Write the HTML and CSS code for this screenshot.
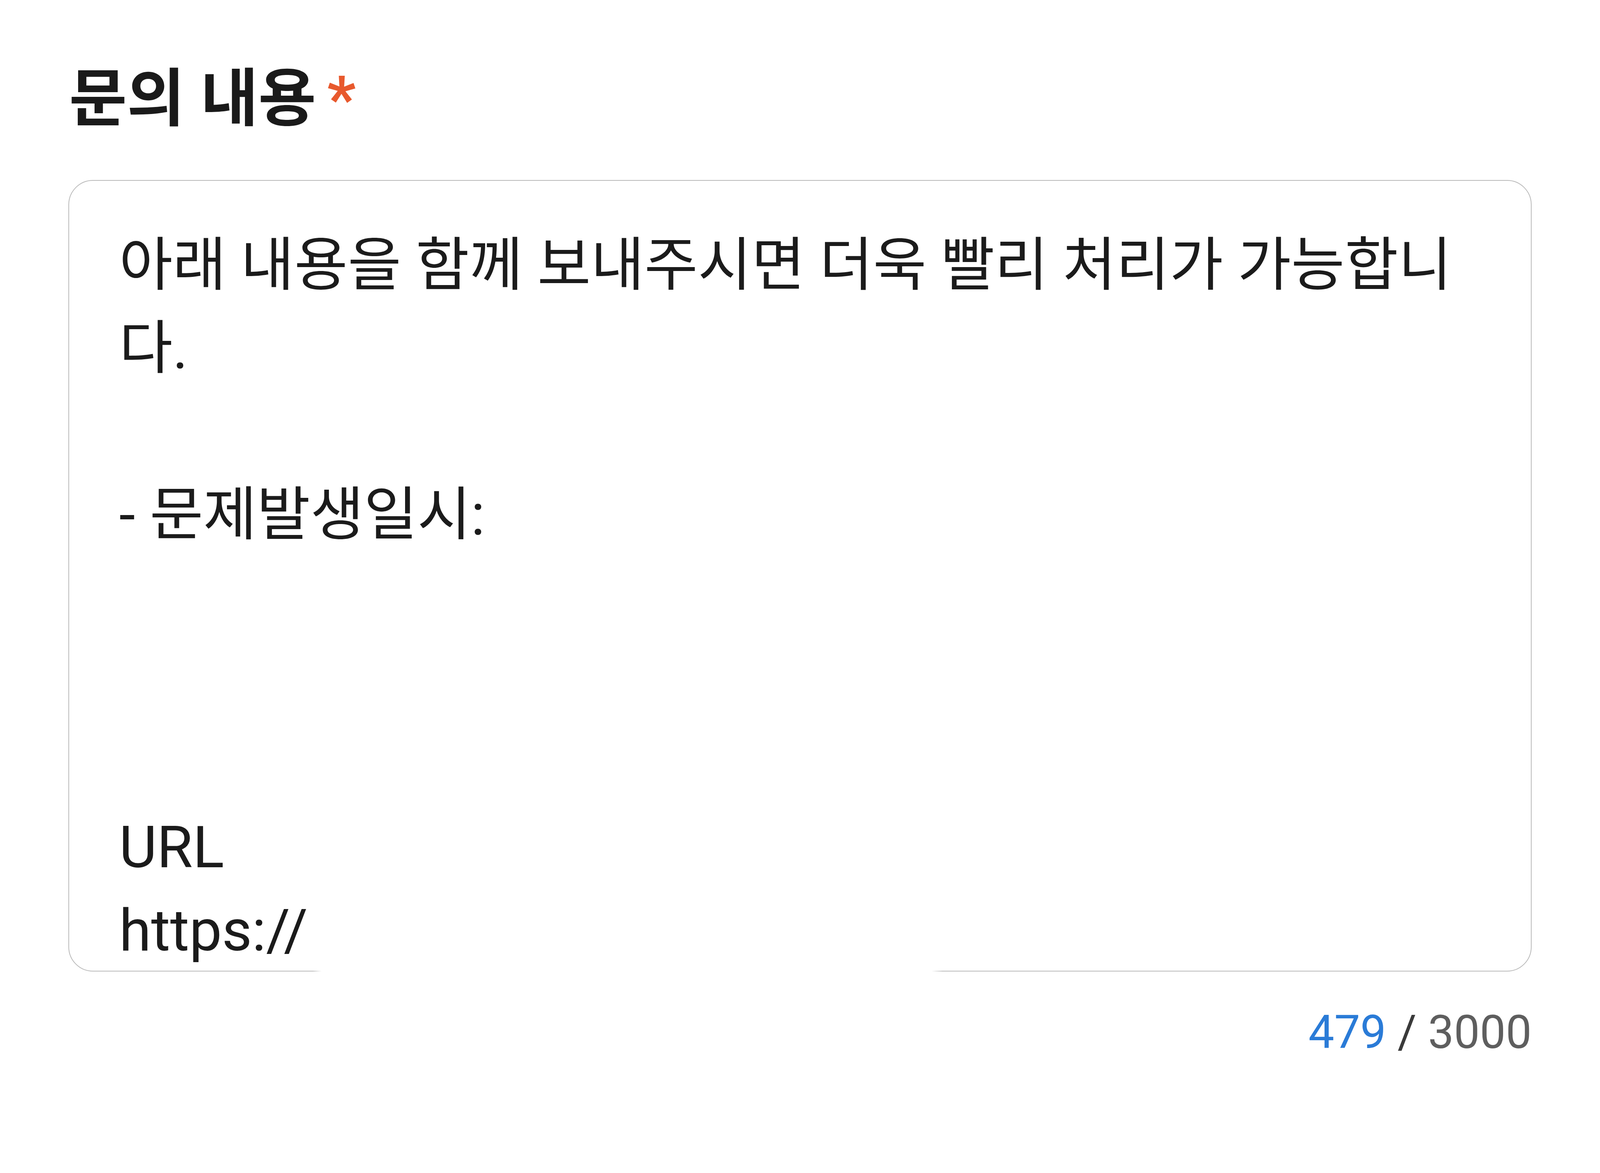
FILE: index.html
```html
<!DOCTYPE html>
<html lang="ko">
<head>
<meta charset="utf-8">
<title>문의 내용</title>
<link rel="stylesheet" href="styles.css">
</head>
<body>
<section class="field">
  <h2 class="field-label">문의 내용<span class="required">*</span></h2>
  <div class="textbox-wrap">
    <div class="textbox">
      <div class="textbox-content">아래 내용을 함께 보내주시면 더욱 빨리 처리가 가능합니다.

- 문제발생일시:



URL
https://</div>
    </div>
    <span class="edge-fade"></span>
  </div>
  <div class="counter"><span class="count">479</span> <span class="slash">/</span> <span class="max">3000</span></div>
</section>
</body>
</html>
```
FILE: styles.css
```css
html, body {
  margin: 0;
  padding: 0;
  background: #ffffff;
}

body {
  overflow: hidden;
  font-family: Roboto, "Noto Sans CJK KR", sans-serif;
  color: #1b1b1b;
}

.field {
  padding: 157px 175px 0 175px;
  display: flex;
  flex-direction: column;
}

.field-label {
  margin: 0 0 110px 2px;
  font-size: 161px;
  line-height: 194px;
  font-weight: 700;
  color: #1a1a1a;
  font-family: Roboto, "Noto Sans CJK KR", sans-serif;
}

.required {
  margin-left: 28px;
  color: #e8592d;
  font-weight: 700;
}

.textbox-wrap {
  position: relative;
}

.textbox {
  box-sizing: border-box;
  height: 2027px;
  border: 2px solid #bababa;
  border-radius: 63px;
  padding: 110px 128px 0 128px;
  overflow: hidden;
}

.textbox-content {
  white-space: pre-wrap;
  font-size: 149px;
  line-height: 213px;
  color: #1b1b1b;
}

.edge-fade {
  position: absolute;
  left: 626px;
  bottom: -3px;
  width: 1612px;
  height: 8px;
  background: linear-gradient(to right, rgba(255,255,255,0), #ffffff 22px, #ffffff calc(100% - 28px), rgba(255,255,255,0));
}

.counter {
  margin-top: 86px;
  align-self: flex-end;
  font-size: 118px;
  line-height: 141px;
  color: #5e5e5e;
}

.count {
  color: #2a7bd7;
}

.slash {
  color: #3a3a3a;
}
```
